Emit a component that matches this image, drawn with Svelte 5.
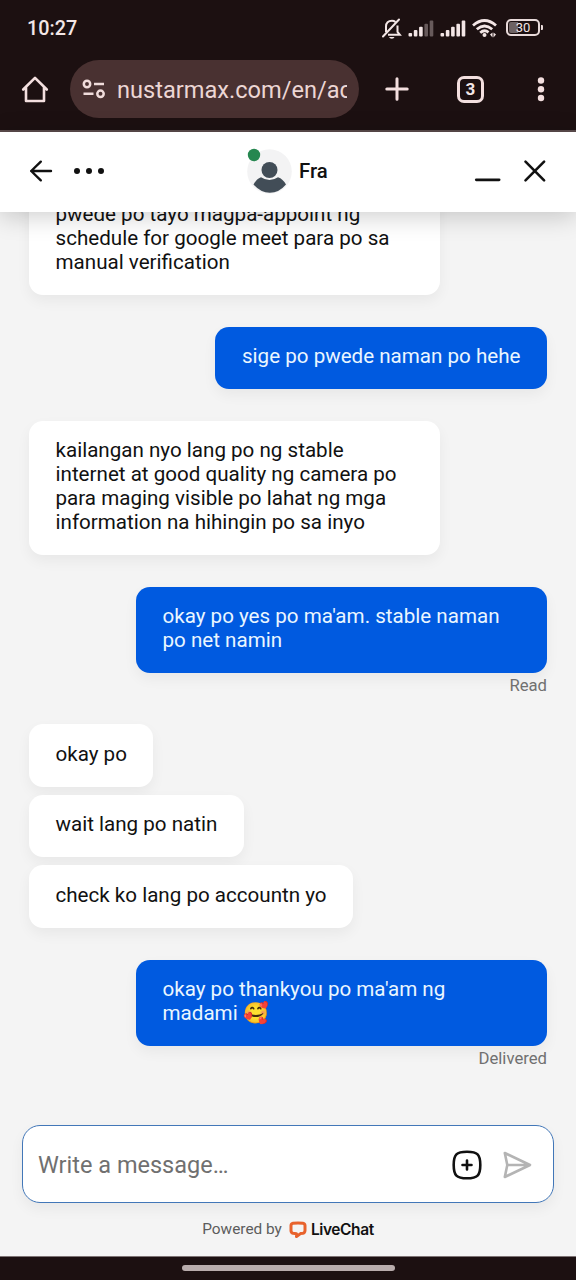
<!--
  Mobile support chat inside a browser shell: status bar, address bar,
  agent header, message thread, composer and gesture bar.
-->
<script lang="ts">
  type Message = { lines: string[]; status?: string; wide?: boolean };
  type Group = { from: "agent" | "me"; messages: Message[] };

  const groups: Group[] = [
    {
      from: "agent",
      messages: [
        {
          lines: [
            "pwede po tayo magpa-appoint ng",
            "schedule for google meet para po sa",
            "manual verification"
          ],
          wide: true
        }
      ]
    },
    { from: "me", messages: [{ lines: ["sige po pwede naman po hehe"] }] },
    {
      from: "agent",
      messages: [
        {
          lines: [
            "kailangan nyo lang po ng stable",
            "internet at good quality ng camera po",
            "para maging visible po lahat ng mga",
            "information na hihingin po sa inyo"
          ],
          wide: true
        }
      ]
    },
    {
      from: "me",
      messages: [
        {
          lines: ["okay po yes po ma'am. stable naman", "po net namin"],
          status: "Read",
          wide: true
        }
      ]
    },
    {
      from: "agent",
      messages: [
        { lines: ["okay po"] },
        { lines: ["wait lang po natin"] },
        { lines: ["check ko lang po accountn yo"] }
      ]
    },
    {
      from: "me",
      messages: [
        {
          lines: ["okay po thankyou po ma'am ng", "madami 🥰"],
          status: "Delivered",
          wide: true
        }
      ]
    }
  ];

  // signal strength bars, shortest first
  const bars = [0, 1, 2, 3, 4];
  const signals = [3, 5];
</script>

{#snippet signal(level: number)}
  <svg class="signal" width="26" height="17" viewBox="0 0 26 17">
    {#each bars as i}
      <rect
        x={0.5 + i * 5.3}
        y={13 - i * 3.1}
        width="3.6"
        height={3.6 + i * 3.1}
        rx="1"
        fill="#f3e6e6"
        opacity={i < level ? 1 : 0.35}
      />
    {/each}
  </svg>
{/snippet}

<div class="screen">
  <div class="shell">
    <div class="status-bar">
      <span class="clock">10:27</span>
      <div class="status-icons">
        <svg width="20" height="22" viewBox="0 0 20 22" fill="none" stroke="#f3e6e6" stroke-width="2">
          <path d="M4 14V8.5C4 5 6.200 2.800 10 2.800c1.500 0 2.500.4 3.500 1.200M15.500 7.500v6.500l2.300 2.800H6" />
          <path d="M1 18.500L17 1.500" stroke-linecap="round" />
          <path d="M7 19h5.500q-.5 1.800-2.700 1.800T7 19z" fill="#f3e6e6" stroke="none" />
        </svg>
        {#each signals as level}
          {@render signal(level)}
        {/each}
        <svg class="wifi" width="26" height="19" viewBox="0 0 26 19" fill="none" stroke="#f3e6e6" stroke-width="2.800">
          <path d="M1 6.500Q12.500-3.500 24 6.500" />
          <path d="M4.800 10.300Q12.500 3.700 20.200 10.300" />
          <path d="M8.200 13.700Q12.500 10 16.500 13.300" />
          <circle cx="12.500" cy="16" r="2" fill="#f3e6e6" stroke="none" />
          <path d="M18 15.500l2.500-2v5zM24 15.500l-2.500-2v5z" fill="#f3e6e6" stroke="none" />
        </svg>
        <div class="battery">
          <span>30</span>
        </div>
      </div>
    </div>

    <div class="toolbar">
      <svg width="28" height="28" viewBox="0 0 28 28" fill="none" stroke="#f3dfdf" stroke-width="2.600" stroke-linecap="round" stroke-linejoin="round">
        <path d="M2.200 14.500L14 2.800l11.800 11.700M5 12.500V26h18V12.500" />
      </svg>
      <div class="omnibox">
        <svg width="24" height="20" viewBox="0 0 24 20" fill="none" stroke="#f0dcdb" stroke-width="2.500">
          <circle cx="5" cy="5" r="3.200" />
          <path d="M12 5h10M1.500 14.800h10" />
          <circle cx="18.500" cy="14.800" r="3.200" />
        </svg>
        <span class="url">nustarmax.com/en/ac</span>
      </div>
      <svg class="plus" width="24" height="24" viewBox="0 0 24 24" stroke="#f3dfdf" stroke-width="3" stroke-linecap="round">
        <path d="M12 1.800v20.400M1.800 12h20.400" />
      </svg>
      <div class="tabs">3</div>
      <svg class="kebab" width="8" height="26" viewBox="0 0 8 26" fill="#f3dfdf">
        <circle cx="4" cy="4.500" r="3.200" />
        <circle cx="4" cy="13.300" r="3.200" />
        <circle cx="4" cy="22" r="3.200" />
      </svg>
    </div>
  </div>

  <header class="chat-header">
    <svg width="24" height="24" viewBox="0 0 24 24" fill="none" stroke="#111" stroke-width="2.400" stroke-linecap="round" stroke-linejoin="round">
      <path d="M22 12H2.200M11.800 2.700L2.200 12l9.600 9.300" />
    </svg>
    <svg class="more" width="32" height="8" viewBox="0 0 32 8" fill="#111">
      <circle cx="4" cy="4" r="3" />
      <circle cx="16" cy="4" r="3" />
      <circle cx="28" cy="4" r="3" />
    </svg>
    <div class="agent">
      <svg width="46" height="46" viewBox="0 0 46 46">
        <circle cx="22.500" cy="23.500" r="22.300" fill="#f3f3f4" />
        <circle cx="22.500" cy="22" r="8" fill="#424d57" />
        <path d="M6.500 36.500Q9.500 31 14 29.300q8.500 5.500 17 0Q36 31 39 36.500 32 44.800 22.800 44.800T6.500 36.500z" fill="#424d57" />
        <circle cx="7" cy="7" r="6.200" fill="#268750" />
      </svg>
      <span class="name">Fra</span>
    </div>
    <div class="window-actions">
      <svg width="28" height="24" viewBox="0 0 28 24" stroke="#111" stroke-width="2.800" stroke-linecap="round">
        <path d="M2.300 20.800h22.800" />
      </svg>
      <svg width="24" height="24" viewBox="0 0 24 24" stroke="#111" stroke-width="2.600" stroke-linecap="round">
        <path d="M2.500 2.700l18.600 18.600M21.100 2.700L2.500 21.300" />
      </svg>
    </div>
  </header>

  <main class="thread">
    {#each groups as group}
      <div class="group" data-from={group.from}>
        {#each group.messages as message}
          <div class="bubble" class:wide={message.wide}>
            {#each message.lines as line}
              <div class="line">{line}</div>
            {/each}
          </div>
          {#if message.status}
            <div class="receipt">{message.status}</div>
          {/if}
        {/each}
      </div>
    {/each}
  </main>

  <footer class="footer">
    <div class="composer">
      <span class="placeholder">Write a message…</span>
      <svg width="30" height="30" viewBox="0 0 30 30" fill="none" stroke="#111" stroke-width="2.600" stroke-linecap="round">
        <path d="M15 1.700C25.500 1.700 28.300 4.500 28.300 15S25.500 28.300 15 28.300 1.700 25.500 1.700 15 4.500 1.700 15 1.700z" />
        <path d="M15 10.500v9M10.500 15h9" />
      </svg>
      <svg class="send" width="30" height="28" viewBox="0 0 30 28" fill="none" stroke="#b4b4b4" stroke-width="2.600" stroke-linecap="round" stroke-linejoin="round">
        <path d="M2.800 2L28 14 2.800 26 5.300 14zM5.300 14h22" />
      </svg>
    </div>
    <div class="powered">
      <span>Powered by</span>
      <svg width="18" height="18" viewBox="0 0 18 18" fill="none" stroke="#e8622c" stroke-width="3" stroke-linejoin="round">
        <path d="M4 2.300Q9 1.500 14 2.300 15.900 2.600 16 4.500V9.500Q15.900 11.800 14 12.300L11.500 12.600 7.500 15.500V12.700L4 12.300Q2 11.800 2 9.500V4.500Q2.100 2.600 4 2.300z" />
      </svg>
      <b>LiveChat</b>
    </div>
  </footer>

  <div class="gesture-bar"><i></i></div>
</div>

<style>
  :global(body) { background: #f4f4f4; }

  .screen {
    display: flex;
    flex-direction: column;
    width: 576px;
    height: 1280px;
    overflow: hidden;
    box-sizing: border-box;
    font-family: Roboto, "Liberation Sans", sans-serif;
    background: #f4f4f4;
    color: #111;
  }
  svg { display: block; flex: none; }

  .shell {
    box-sizing: border-box;
    flex: none;
    height: 132px;
    background: #1c1011;
    border-bottom: 2px solid #5b4b4c;
    color: #f3e6e6;
  }
  .status-bar {
    display: flex;
    align-items: center;
    justify-content: space-between;
    height: 60px;
    box-sizing: border-box;
    padding: 0 32px 3px 27px;
  }
  .clock { font-size: 19.8px; font-weight: 500; }
  .status-icons { display: flex; align-items: center; }
  .signal { margin-left: 6px; }
  .wifi { margin-left: 6px; }
  .battery {
    position: relative;
    display: grid;
    place-items: center;
    box-sizing: border-box;
    width: 34px;
    height: 17px;
    margin: 0 4px 2px 8px;
    padding: 1px;
    border: 2px solid #e8dada;
    border-radius: 5px;
    background: linear-gradient(90deg, #6d6263 32%, transparent 32%) content-box;
    font-size: 13px;
    line-height: 11px;
  }
  .battery::after {
    content: "";
    position: absolute;
    right: -5px;
    top: 4px;
    width: 2px;
    height: 5px;
    border-radius: 0 1px 1px 0;
    background: #e8dada;
  }

  .toolbar { display: flex; align-items: center; height: 58px; padding-left: 21px; }
  .omnibox {
    display: flex;
    align-items: center;
    box-sizing: border-box;
    width: 289px;
    height: 58px;
    margin-left: 21px;
    padding: 0 11px 0 12px;
    border-radius: 29px;
    background: #493131;
  }
  .url {
    width: 230px;
    margin-left: 11px;
    padding-top: 2px;
    overflow: hidden;
    white-space: nowrap;
    font-size: 23.6px;
    color: #ecd6d4;
  }
  .plus { margin-left: 26px; }
  .tabs {
    display: grid;
    place-items: center;
    box-sizing: border-box;
    width: 27px;
    height: 27px;
    margin-left: 48px;
    border: 3px solid #f3dfdf;
    border-radius: 7px;
    font-size: 17px;
    font-weight: 700;
    line-height: 21px;
  }
  .kebab { margin-left: 53px; }

  .chat-header {
    position: relative;
    z-index: 1;
    display: flex;
    align-items: center;
    flex: none;
    box-sizing: border-box;
    height: 80px;
    padding: 0 29px 2px;
    background: #fff;
    box-shadow: 0 4px 24px rgba(0, 0, 0, 0.2);
  }
  .more { margin-left: 20px; }
  .agent { display: flex; align-items: center; margin-left: 142px; }
  .name { margin-left: 6px; font-size: 20.3px; font-weight: 500; }
  .window-actions { display: flex; gap: 21px; margin-left: auto; }

  .thread {
    display: flex;
    flex-direction: column;
    justify-content: flex-end;
    flex: 1;
    min-height: 0;
    gap: 32px;
    padding: 0 29px 60px;
    overflow: hidden;
  }
  .group { display: flex; flex-direction: column; align-items: flex-start; gap: 8.3px; }
  .group[data-from="me"] { align-items: flex-end; gap: 0; }
  .bubble {
    box-sizing: border-box;
    padding: 17.2px 26.5px 21px;
    border-radius: 14px;
    background: #fff;
    box-shadow: 0 6px 14px rgba(0, 0, 0, 0.05);
  }
  .wide { width: 411px; }
  .line { height: 24px; font-size: 20.6px; line-height: 24px; white-space: nowrap; }
  .group[data-from="me"] .bubble { background: #005ae0; color: #eaf6ff; }
  .receipt {
    height: 16.3px;
    margin-top: 3px;
    font-size: 16.7px;
    line-height: 19px;
    color: #707070;
  }

  .footer { flex: none; height: 131px; padding: 0 22px; }
  .composer {
    display: flex;
    align-items: center;
    box-sizing: border-box;
    height: 78px;
    padding: 2px 21px 0 15px;
    border: 1.5px solid #4277b8;
    border-radius: 18px;
    background: #fff;
    box-shadow: 0 6px 14px rgba(0, 0, 0, 0.05);
  }
  .placeholder { margin-right: auto; font-size: 23.5px; color: #707070; }
  .send { margin-left: 20px; }
  .powered {
    display: flex;
    align-items: center;
    justify-content: center;
    height: 20px;
    margin-top: 16px;
    font-size: 15.4px;
    color: #5c5c5c;
  }
  .powered svg { margin: 1px 4px 0 7px; }
  .powered b {
    color: #111;
    font-family: Inter, sans-serif;
    font-size: 15.5px;
    font-weight: 600;
    letter-spacing: -0.4px;
  }

  .gesture-bar {
    display: flex;
    justify-content: center;
    box-sizing: border-box;
    flex: none;
    height: 24px;
    padding-top: 8px;
    background: #1c1011;
    border-top: 1.5px solid #7d7374;
  }
  .gesture-bar i { width: 213px; height: 6px; border-radius: 3px; background: #b8acac; }
</style>
